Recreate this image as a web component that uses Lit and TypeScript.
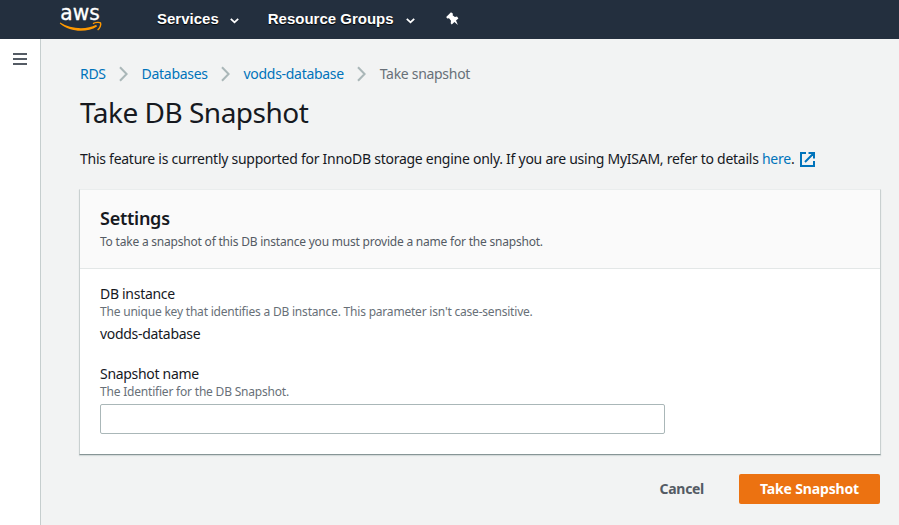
import { LitElement, html, css } from "lit";
import { customElement, property } from "lit/decorators.js";

@customElement("nav-menu")
class NavMenu extends LitElement {
  @property() label = "";
  static styles = css`
    :host { display: flex; align-items: center; gap: 11px; color: #fff; font: bold 15px/18px "Liberation Sans", Arial, sans-serif; text-shadow: 0 1px 1px #000; white-space: nowrap; }
    .caret { display: block; margin-top: 4px; }
  `;
  render() {
    return html`<span>${this.label}</span>
      <svg class="caret" width="9" height="6" viewBox="0 0 9 6" fill="none" stroke="#fff" stroke-width="1.8"><path d="M.8 .8 4.5 4.3 8.2 .8" /></svg>`;
  }
}

@customElement("top-bar")
class TopBar extends LitElement {
  static styles = css`
    :host { display: flex; align-items: center; height: 39px; background: #232f3e; box-sizing: border-box; padding-left: 59px; }
    .logo { display: block; width: 43px; height: 39px; overflow: visible; font: 21.3px/22px "DejaVu Sans", sans-serif; }
    .menus { display: flex; align-items: center; gap: 29px; margin: -2px 0 0 55px; }
    .menus nav-menu + nav-menu { gap: 12px; }
    .pin { display: block; margin: -2px 0 0 31px; }
  `;
  render() {
    return html`
      <svg class="logo" viewBox="0 0 43 39">
        <text x="1.300" y="20" fill="#fff" stroke="#fff" stroke-width=".3" textLength="39.500" lengthAdjust="spacingAndGlyphs">aws</text>
        <path d="M1.200 22.600c10 6.400 26 7.600 36 2.200l.8 1.600C28 32.800 11.500 32.500.8 23.500z" fill="#ff9900" />
        <path d="M34 23.600c2.400-1.400 6.400-1.500 7.500-.8.8 1.400-.3 5.200-2.900 7.200" fill="none" stroke="#ff9900" stroke-width="1.400" />
      </svg>
      <div class="menus"><nav-menu label="Services"></nav-menu><nav-menu label="Resource Groups"></nav-menu></div>
      <svg class="pin" width="13" height="14" viewBox="0 0 13 14"><path d="M5 .2 7 1.800 6.600 3.200 8.900 5 11 4.500 12.400 6.400 10 8.400 11.900 13 8.400 10.100 5.800 12.500 4.700 11.300 5 8.700 3 6.300 1.200 6.500.2 4.900z" fill="#fff" /></svg>
    `;
  }
}

@customElement("crumb-trail")
class CrumbTrail extends LitElement {
  @property({ attribute: false }) items: string[] = [];
  static styles = css`
    :host { display: flex; align-items: center; height: 22px; font-size: 14px; letter-spacing: -0.3px; color: #687078; white-space: nowrap; }
    .link { color: #0073bb; }
    .sep { display: block; margin: 0 13.400px 0 13.500px; }
  `;
  render() {
    const last = this.items.length - 1;
    return this.items.map((t, i) => i < last
      ? html`<span class="link">${t}</span><svg class="sep" width="9" height="16" viewBox="0 0 9 16" fill="none" stroke="#aab7b8" stroke-width="2"><path d="M1 1.200 7.600 8 1 14.800" /></svg>`
      : html`<span>${t}</span>`);
  }
}

@customElement("app-root")
class AppRoot extends LitElement {
  static styles = css`
    :host { display: flex; flex-direction: column; height: 525px; overflow: hidden; background: #f2f3f3; color: #16191f; font: 14px/22px "Noto Sans", sans-serif; }
    .shell { display: flex; flex: 1; min-height: 0; }
    .rail { box-sizing: border-box; width: 41px; background: #fff; border-right: 1px solid #c6cece; padding: 14px 0 0 13px; }
    .burger { display: block; }
    main { flex: 1; padding: 24px 18px 0 39px; white-space: nowrap; }
    h1 { margin: 0; padding-top: 10px; font-size: 28px; line-height: 34px; font-weight: 400; letter-spacing: -0.5px; }
    .notice { display: flex; align-items: center; height: 22px; margin-top: 19px; letter-spacing: -0.262px; }
    .link { color: #0073bb; }
    .external { display: block; margin-left: 6px; }
    .panel { box-sizing: border-box; width: 802px; height: 266px; margin: 19px 0 0 -1px; background: #fff; border: 1px solid #c9d0d0; border-top-color: #eaeded; border-bottom-color: #879596; box-shadow: 0 1px 1px #d5dbdb; }
    .panel-head { box-sizing: border-box; height: 79px; padding: 17px 20px 0; background: #fafafa; border-bottom: 1px solid #e3e7e7; }
    h2 { margin: 0; font-size: 18px; line-height: 22px; font-weight: 600; letter-spacing: -0.25px; }
    .hint { font-size: 12px; line-height: 16px; letter-spacing: -0.2px; color: #687078; }
    .head-hint { margin-top: 5px; letter-spacing: -0.21px; color: #545b64; }
    .panel-body { padding: 14px 20px 0; }
    .label { letter-spacing: -0.3px; }
    .label + .hint { margin-top: -1px; }
    .value { margin-top: 3px; }
    .field + .field { margin-top: 18px; }
    .input { display: block; box-sizing: border-box; width: 565px; height: 30px; margin-top: 4px; border: 1px solid #aab7b8; border-radius: 2px; background: #fff; }
    .actions { display: flex; justify-content: flex-end; align-items: center; margin-top: 19px; padding-right: 1px; font-weight: 700; }
    .cancel { margin-right: 35px; color: #545b64; letter-spacing: -0.3px; }
    .primary { width: 141px; height: 30px; line-height: 30px; border-radius: 2px; background: #ec7211; color: #fff; text-align: center; letter-spacing: -0.15px; }
  `;
  render() {
    return html`
      <top-bar></top-bar>
      <div class="shell">
        <div class="rail"><svg class="burger" width="14" height="12" viewBox="0 0 14 12" fill="#545b64"><path d="M0 0h14v2H0zM0 5h14v2H0zM0 10h14v2H0z" /></svg></div>
        <main>
          <crumb-trail .items=${["RDS", "Databases", "vodds-database", "Take snapshot"]}></crumb-trail>
          <h1>Take DB Snapshot</h1>
          <div class="notice">
            <span>This feature is currently supported for InnoDB storage engine only. If you are using MyISAM, refer to details <span class="link">here</span>.</span>
            <svg class="external" width="15" height="15" viewBox="0 0 15 15" fill="none" stroke="#0073bb" stroke-width="2"><path d="M6 1H1v13h13V9M8.500 1H14v5.500M13.700 1.300 5 10" /></svg>
          </div>
          <section class="panel">
            <div class="panel-head"><h2>Settings</h2><div class="hint head-hint">To take a snapshot of this DB instance you must provide a name for the snapshot.</div></div>
            <div class="panel-body">
              <div class="field"><div class="label">DB instance</div><div class="hint">The unique key that identifies a DB instance. This parameter isn't case-sensitive.</div><div class="label value">vodds-database</div></div>
              <div class="field"><div class="label">Snapshot name</div><div class="hint">The Identifier for the DB Snapshot.</div><div class="input"></div></div>
            </div>
          </section>
          <div class="actions"><span class="cancel">Cancel</span><div class="primary">Take Snapshot</div></div>
        </main>
      </div>`;
  }
}
